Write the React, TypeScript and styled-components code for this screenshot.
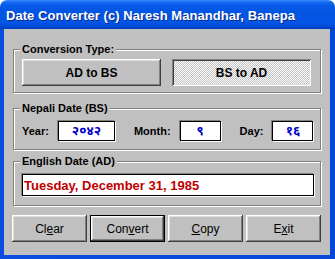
import React from "react";
import styled, { createGlobalStyle } from "styled-components";

const Global = createGlobalStyle`
  html, body { margin: 0; padding: 0; background: #ffffff; }
  body { width: 335px; height: 259px; overflow: hidden; }
`;

const Window = styled.div`
  width: 335px;
  height: 259px;
  display: flex;
  flex-direction: column;
  box-sizing: border-box;
`;

const TitleBar = styled.div`
  height: 29px;
  flex: none;
  display: flex;
  align-items: center;
  padding: 2px 0 0 6px;
  box-sizing: border-box;
  border-radius: 7px 7px 0 0;
  background: linear-gradient(
    to bottom,
    #3b8ef8 0px,
    #1a6cf2 2px,
    #065ae8 5px,
    #0254e2 14px,
    #0456e6 22px,
    #0048d4 27px,
    #0038b8 29px
  );
`;

const Title = styled.span`
  font-family: "Liberation Sans", Arial, sans-serif;
  font-weight: bold;
  font-size: 13px;
  letter-spacing: 0.05px;
  color: #ffffff;
  text-shadow: 1px 1px 0 #0a2a8a;
  white-space: nowrap;
`;

const Frame = styled.div`
  flex: 1;
  display: flex;
  padding: 0 5px 4px 4px;
  background: linear-gradient(to right, #0a4de0, #0647d8);
`;

const Content = styled.div`
  flex: 1;
  background: #c0c0c0;
  display: flex;
  flex-direction: column;
  padding: 20px 9px 0 9px;
  font-family: "Liberation Sans", Arial, sans-serif;
  font-size: 11px;
  color: #000;
`;

const Group = styled.div<{ $mt: number; $pt: number; $pb: number }>`
  position: relative;
  margin-top: ${(p) => p.$mt}px;
  width: 308px;
  box-sizing: border-box;
  padding: ${(p) => p.$pt}px 7px ${(p) => p.$pb}px 7px;
  border: 1px solid #808080;
  box-shadow: inset 1px 1px 0 #ffffff, 1px 1px 0 #ffffff;
`;

const Legend = styled.span`
  position: absolute;
  top: -8px;
  left: 6px;
  padding: 0 2px;
  background: #c0c0c0;
  font-weight: bold;
  font-size: 11px;
  line-height: 14px;
`;

const ToggleRow = styled.div`
  display: flex;
  gap: 11px;
  padding-left: 1px;
`;

const ToggleButton = styled.div<{ $pressed?: boolean }>`
  width: 139px;
  height: 27px;
  display: flex;
  align-items: center;
  justify-content: center;
  font-weight: bold;
  font-size: 12px;
  background: ${(p) =>
    p.$pressed
      ? "repeating-conic-gradient(#ffffff 0 25%, #c0c0c0 0 50%) 0 0 / 2px 2px"
      : "#c0c0c0"};
  box-shadow: ${(p) =>
    p.$pressed
      ? "inset 1px 1px 0 #808080, inset -1px -1px 0 #ffffff, inset 2px 2px 0 #404040, inset -2px -2px 0 #dfdfdf"
      : "inset -1px -1px 0 #404040, inset 1px 1px 0 #ffffff, inset -2px -2px 0 #808080, inset 2px 2px 0 #dfdfdf"};
`;

const FieldRow = styled.div`
  display: flex;
  align-items: center;
  padding-left: 1px;
`;

const Pair = styled.div<{ $ml: number }>`
  display: flex;
  align-items: center;
  gap: 9px;
  margin-left: ${(p) => p.$ml}px;
`;

const FieldLabel = styled.span`
  font-weight: bold;
  font-size: 11px;
`;

const NumBox = styled.div<{ $w: number }>`
  width: ${(p) => p.$w}px;
  height: 20px;
  box-sizing: border-box;
  background: #ffffff;
  border: 1px solid #000000;
  box-shadow: 1px 1px 0 #ffffff, -1px -1px 0 #808080;
  display: flex;
  align-items: center;
  justify-content: center;
  color: #0000c8;
  font-weight: bold;
  font-size: 13px;
  font-family: "Noto Sans Devanagari", "Lohit Devanagari", "Noto Sans", sans-serif;
`;

const DateBox = styled.div`
  margin-left: 1px;
  width: 292px;
  height: 22px;
  box-sizing: border-box;
  background: #ffffff;
  border: 1px solid #000000;
  box-shadow: 1px 1px 0 #ffffff, -1px -1px 0 #808080;
  display: flex;
  align-items: center;
  padding-left: 1px;
  color: #c00000;
  font-weight: bold;
  font-size: 13px;
`;

const ButtonRow = styled.div`
  display: flex;
  gap: 3px;
  margin-top: 9px;
  margin-left: -1px;
`;

const PushButton = styled.div<{ $default?: boolean }>`
  width: 75px;
  height: 27px;
  box-sizing: border-box;
  display: flex;
  align-items: center;
  justify-content: center;
  font-size: 12px;
  background: #c0c0c0;
  border: ${(p) => (p.$default ? "1px solid #000000" : "none")};
  box-shadow: inset -1px -1px 0 #404040, inset 1px 1px 0 #ffffff,
    inset -2px -2px 0 #808080, inset 2px 2px 0 #dfdfdf;
`;

const Key = styled.u`
  text-decoration: underline;
`;

export default function App() {
  return (
    <>
      <Global />
      <Window>
        <TitleBar>
          <Title>Date Converter (c) Naresh Manandhar, Banepa</Title>
        </TitleBar>
        <Frame>
          <Content>
            <Group $mt={0} $pt={9} $pb={6}>
              <Legend>Conversion Type:</Legend>
              <ToggleRow>
                <ToggleButton>AD to BS</ToggleButton>
                <ToggleButton $pressed>BS to AD</ToggleButton>
              </ToggleRow>
            </Group>
            <Group $mt={15} $pt={12} $pb={8}>
              <Legend>Nepali Date (BS)</Legend>
              <FieldRow>
                <Pair $ml={0}>
                  <FieldLabel>Year:</FieldLabel>
                  <NumBox $w={57}>२०४२</NumBox>
                </Pair>
                <Pair $ml={19}>
                  <FieldLabel>Month:</FieldLabel>
                  <NumBox $w={41}>९</NumBox>
                </Pair>
                <Pair $ml={19}>
                  <FieldLabel>Day:</FieldLabel>
                  <NumBox $w={41}>१६</NumBox>
                </Pair>
              </FieldRow>
            </Group>
            <Group $mt={11} $pt={12} $pb={9}>
              <Legend>English Date (AD)</Legend>
              <DateBox>Tuesday, December 31, 1985</DateBox>
            </Group>
            <ButtonRow>
              <PushButton>
                <span>
                  Cl<Key>e</Key>ar
                </span>
              </PushButton>
              <PushButton $default>
                <span>
                  Con<Key>v</Key>ert
                </span>
              </PushButton>
              <PushButton>
                <span>
                  <Key>C</Key>opy
                </span>
              </PushButton>
              <PushButton>
                <span>
                  E<Key>x</Key>it
                </span>
              </PushButton>
            </ButtonRow>
          </Content>
        </Frame>
      </Window>
    </>
  );
}
